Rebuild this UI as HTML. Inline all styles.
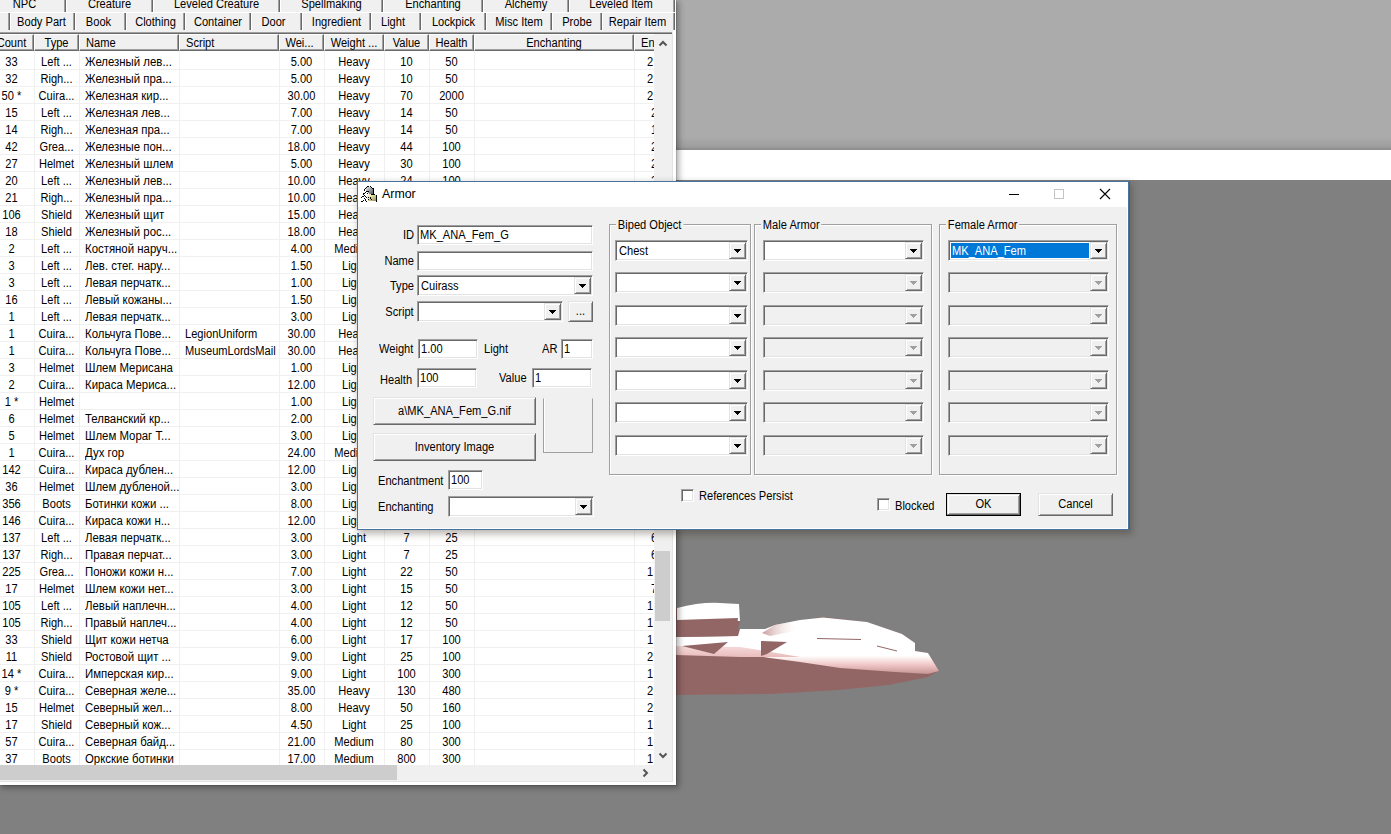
<!DOCTYPE html><html><head><meta charset="utf-8"><style>
*{box-sizing:border-box;margin:0;padding:0}
html,body{width:1391px;height:834px;overflow:hidden;background:#808080;font-family:"Liberation Sans", sans-serif;font-size:10.6px;color:#000}
.ab{position:absolute}
.t{position:absolute;white-space:nowrap;line-height:12px;font-size:12px;transform:scaleX(0.925);transform-origin:0 0}
.t.ctr{transform-origin:50% 0}
.t.rt{transform-origin:100% 0}
.sunk{position:absolute;background:#fff;border-top:1px solid #a0a0a0;border-left:1px solid #a0a0a0;border-bottom:1px solid #fff;border-right:1px solid #fff;box-shadow:inset 1px 1px 0 #696969, inset -1px -1px 0 #e3e3e3}
.sunk.dis{background:#f0f0f0}
.rais{position:absolute;background:#f0f0f0;border-top:1px solid #e3e3e3;border-left:1px solid #e3e3e3;border-bottom:1px solid #696969;border-right:1px solid #696969;box-shadow:inset 1px 1px 0 #fff, inset -1px -1px 0 #a0a0a0}
.tri{position:absolute;width:0;height:0;border-left:3.5px solid transparent;border-right:3.5px solid transparent;border-top:4px solid #000}
.tri.dis{border-top-color:#a0a0a0}
.grp{position:absolute;border:1px solid #a0a0a0;box-shadow:1px 1px 0 #fff, inset 1px 1px 0 #fff}
.gl{position:absolute;background:#f0f0f0;padding:0 2px;line-height:12px;white-space:nowrap;font-size:12px;transform:scaleX(0.925);transform-origin:0 0}
.row{position:absolute;left:0;width:654px;height:17px}
.c{position:absolute;top:0;height:16px;line-height:16px;white-space:nowrap;font-size:12px;transform:scaleX(0.925);transform-origin:0 0}
.c.ctr{transform-origin:50% 0}
</style></head><body>
<div class="ab" style="left:676px;top:0;width:715px;height:150px;background:linear-gradient(#ababab 0,#ababab 137px,#9d9d9d 147px,#8e8e8e 149px)"></div>
<div class="ab" style="left:676px;top:150px;width:715px;height:30px;background:#fff"></div>
<svg class="ab" style="left:0;top:0" width="1391" height="834">
<defs>
<linearGradient id="g1" x1="0" y1="617" x2="0" y2="674" gradientUnits="userSpaceOnUse"><stop offset="0" stop-color="#fff"/><stop offset="0.68" stop-color="#fff"/><stop offset="0.84" stop-color="#f0c6c6"/><stop offset="1" stop-color="#c49494"/></linearGradient>
<linearGradient id="g2" x1="0" y1="646" x2="0" y2="660" gradientUnits="userSpaceOnUse"><stop offset="0" stop-color="#f6dada"/><stop offset="1" stop-color="#e6b4b4"/></linearGradient>
<linearGradient id="g3" x1="760" y1="0" x2="800" y2="0" gradientUnits="userSpaceOnUse"><stop offset="0" stop-color="#c58f8f"/><stop offset="1" stop-color="#fff" stop-opacity="0"/></linearGradient>
</defs>
<polygon fill="#936666" points="676,608 710,603 739,604 740,621 738,629 765,629 775,625 823,617 867,622 902,634 915,643 915,651 928,653 939,671 928,677 889,685 838,690 771,694 676,695"/>
<polygon fill="url(#g1)" points="740,629 765,629 775,625 800,620 823,617.5 867,622 902,634 915,643 915,651 928,653 939,671 928,674 895,672 840,668 800,662 770,658 740,653 676,651 676,637 738,636"/>
<polygon fill="url(#g2)" points="676,646 740,647 771,652 800,657 740,657 676,655"/>
<polygon fill="url(#g3)" points="762,633 775,625 790,622 800,630 770,636"/>
<path fill="#fff" d="M677,608 Q700,602 720,603 L739,604 L740,621 L677,621 Z"/>
<polygon fill="#936666" points="677,620 738,618 736,636 677,637"/>
<polygon fill="#936666" points="682,646 728,642 714,654"/>
<polygon fill="#936666" points="761,641 787,642 767,654 761,656"/>
<line x1="817" y1="638.5" x2="861" y2="639.5" stroke="#936666" stroke-width="1"/>
<line x1="877" y1="646" x2="897" y2="651" stroke="#936666" stroke-width="1"/>
</svg>
<div class="ab" style="left:0;top:0;width:676px;height:785px;background:#f0f0f0;border-right:3px solid #fff;border-bottom:3px solid #fff;box-shadow:1px 1px 0 rgba(0,0,0,0.12), 2px 2px 6px 1px rgba(0,0,0,0.32)"></div>
<div class="ab" style="left:672px;top:33px;width:1px;height:749px;background:#e3e3e3"></div>
<div class="ab" style="left:0;top:781px;width:673px;height:1px;background:#e3e3e3"></div>
<div class="ab" style="left:-17px;top:-8px;width:83px;height:20px;border-left:1px solid #fff;border-right:1px solid #696969;box-shadow:inset -1px 0 0 #a0a0a0"></div>
<div class="t ctr" style="left:-17px;width:83px;top:-2px;text-align:center">NPC</div>
<div class="ab" style="left:66px;top:-8px;width:87px;height:20px;border-left:1px solid #fff;border-right:1px solid #696969;box-shadow:inset -1px 0 0 #a0a0a0"></div>
<div class="t ctr" style="left:66px;width:87px;top:-2px;text-align:center">Creature</div>
<div class="ab" style="left:153px;top:-8px;width:127px;height:20px;border-left:1px solid #fff;border-right:1px solid #696969;box-shadow:inset -1px 0 0 #a0a0a0"></div>
<div class="t ctr" style="left:153px;width:127px;top:-2px;text-align:center">Leveled Creature</div>
<div class="ab" style="left:280px;top:-8px;width:103px;height:20px;border-left:1px solid #fff;border-right:1px solid #696969;box-shadow:inset -1px 0 0 #a0a0a0"></div>
<div class="t ctr" style="left:280px;width:103px;top:-2px;text-align:center">Spellmaking</div>
<div class="ab" style="left:383px;top:-8px;width:100px;height:20px;border-left:1px solid #fff;border-right:1px solid #696969;box-shadow:inset -1px 0 0 #a0a0a0"></div>
<div class="t ctr" style="left:383px;width:100px;top:-2px;text-align:center">Enchanting</div>
<div class="ab" style="left:483px;top:-8px;width:86px;height:20px;border-left:1px solid #fff;border-right:1px solid #696969;box-shadow:inset -1px 0 0 #a0a0a0"></div>
<div class="t ctr" style="left:483px;width:86px;top:-2px;text-align:center">Alchemy</div>
<div class="ab" style="left:569px;top:-8px;width:106px;height:20px;border-left:1px solid #fff;border-right:1px solid #696969;box-shadow:inset -1px 0 0 #a0a0a0"></div>
<div class="t ctr" style="left:568px;width:106px;top:-2px;text-align:center">Leveled Item</div>
<div class="ab" style="left:0;top:12px;width:674px;height:1px;background:#fff"></div>
<div class="ab" style="left:-40px;top:13px;width:50px;height:17px;border-left:1px solid #fff;border-right:1px solid #696969;box-shadow:inset -1px 0 0 #a0a0a0"></div>
<div class="t ctr" style="left:-40px;width:50px;top:16px;text-align:center"></div>
<div class="ab" style="left:10px;top:13px;width:65px;height:17px;border-left:1px solid #fff;border-right:1px solid #696969;box-shadow:inset -1px 0 0 #a0a0a0"></div>
<div class="t ctr" style="left:9px;width:65px;top:16px;text-align:center">Body Part</div>
<div class="ab" style="left:75px;top:13px;width:51px;height:17px;border-left:1px solid #fff;border-right:1px solid #696969;box-shadow:inset -1px 0 0 #a0a0a0"></div>
<div class="t ctr" style="left:72.5px;width:51px;top:16px;text-align:center">Book</div>
<div class="ab" style="left:126px;top:13px;width:59px;height:17px;border-left:1px solid #fff;border-right:1px solid #696969;box-shadow:inset -1px 0 0 #a0a0a0"></div>
<div class="t ctr" style="left:126px;width:59px;top:16px;text-align:center">Clothing</div>
<div class="ab" style="left:185px;top:13px;width:66px;height:17px;border-left:1px solid #fff;border-right:1px solid #696969;box-shadow:inset -1px 0 0 #a0a0a0"></div>
<div class="t ctr" style="left:185px;width:66px;top:16px;text-align:center">Container</div>
<div class="ab" style="left:251px;top:13px;width:51px;height:17px;border-left:1px solid #fff;border-right:1px solid #696969;box-shadow:inset -1px 0 0 #a0a0a0"></div>
<div class="t ctr" style="left:248px;width:51px;top:16px;text-align:center">Door</div>
<div class="ab" style="left:302px;top:13px;width:69px;height:17px;border-left:1px solid #fff;border-right:1px solid #696969;box-shadow:inset -1px 0 0 #a0a0a0"></div>
<div class="t ctr" style="left:302px;width:69px;top:16px;text-align:center">Ingredient</div>
<div class="ab" style="left:371px;top:13px;width:50px;height:17px;border-left:1px solid #fff;border-right:1px solid #696969;box-shadow:inset -1px 0 0 #a0a0a0"></div>
<div class="t ctr" style="left:368px;width:50px;top:16px;text-align:center">Light</div>
<div class="ab" style="left:421px;top:13px;width:65px;height:17px;border-left:1px solid #fff;border-right:1px solid #696969;box-shadow:inset -1px 0 0 #a0a0a0"></div>
<div class="t ctr" style="left:421px;width:65px;top:16px;text-align:center">Lockpick</div>
<div class="ab" style="left:486px;top:13px;width:66px;height:17px;border-left:1px solid #fff;border-right:1px solid #696969;box-shadow:inset -1px 0 0 #a0a0a0"></div>
<div class="t ctr" style="left:486px;width:66px;top:16px;text-align:center">Misc Item</div>
<div class="ab" style="left:552px;top:13px;width:50px;height:17px;border-left:1px solid #fff;border-right:1px solid #696969;box-shadow:inset -1px 0 0 #a0a0a0"></div>
<div class="t ctr" style="left:552px;width:50px;top:16px;text-align:center">Probe</div>
<div class="ab" style="left:602px;top:13px;width:73px;height:17px;border-left:1px solid #fff;border-right:1px solid #696969;box-shadow:inset -1px 0 0 #a0a0a0"></div>
<div class="t ctr" style="left:600.5px;width:73px;top:16px;text-align:center">Repair Item</div>
<div class="ab" style="left:0;top:32px;width:672px;height:1px;background:#a0a0a0"></div>
<div class="ab" style="left:0;top:33px;width:672px;height:1px;background:#696969"></div>
<div class="ab" style="left:0;top:34px;width:672px;height:731px;background:#fff"></div>
<div class="ab" style="left:0;top:0;width:654px;height:60px;overflow:hidden">
<div class="ab" style="left:-11px;top:34px;width:45px;height:17px;background:#f0f0f0;border-left:1px solid #fff;border-top:1px solid #fff;border-right:1px solid #696969;border-bottom:1px solid #696969;box-shadow:inset -1px -1px 0 #a0a0a0"></div>
<div class="ab" style="left:34px;top:34px;width:45px;height:17px;background:#f0f0f0;border-left:1px solid #fff;border-top:1px solid #fff;border-right:1px solid #696969;border-bottom:1px solid #696969;box-shadow:inset -1px -1px 0 #a0a0a0"></div>
<div class="ab" style="left:79px;top:34px;width:100px;height:17px;background:#f0f0f0;border-left:1px solid #fff;border-top:1px solid #fff;border-right:1px solid #696969;border-bottom:1px solid #696969;box-shadow:inset -1px -1px 0 #a0a0a0"></div>
<div class="ab" style="left:179px;top:34px;width:100px;height:17px;background:#f0f0f0;border-left:1px solid #fff;border-top:1px solid #fff;border-right:1px solid #696969;border-bottom:1px solid #696969;box-shadow:inset -1px -1px 0 #a0a0a0"></div>
<div class="ab" style="left:279px;top:34px;width:45px;height:17px;background:#f0f0f0;border-left:1px solid #fff;border-top:1px solid #fff;border-right:1px solid #696969;border-bottom:1px solid #696969;box-shadow:inset -1px -1px 0 #a0a0a0"></div>
<div class="ab" style="left:324px;top:34px;width:60px;height:17px;background:#f0f0f0;border-left:1px solid #fff;border-top:1px solid #fff;border-right:1px solid #696969;border-bottom:1px solid #696969;box-shadow:inset -1px -1px 0 #a0a0a0"></div>
<div class="ab" style="left:384px;top:34px;width:45px;height:17px;background:#f0f0f0;border-left:1px solid #fff;border-top:1px solid #fff;border-right:1px solid #696969;border-bottom:1px solid #696969;box-shadow:inset -1px -1px 0 #a0a0a0"></div>
<div class="ab" style="left:429px;top:34px;width:45px;height:17px;background:#f0f0f0;border-left:1px solid #fff;border-top:1px solid #fff;border-right:1px solid #696969;border-bottom:1px solid #696969;box-shadow:inset -1px -1px 0 #a0a0a0"></div>
<div class="ab" style="left:474px;top:34px;width:160px;height:17px;background:#f0f0f0;border-left:1px solid #fff;border-top:1px solid #fff;border-right:1px solid #696969;border-bottom:1px solid #696969;box-shadow:inset -1px -1px 0 #a0a0a0"></div>
<div class="ab" style="left:634px;top:34px;width:44px;height:17px;background:#f0f0f0;border-left:1px solid #fff;border-top:1px solid #fff;border-right:1px solid #696969;border-bottom:1px solid #696969;box-shadow:inset -1px -1px 0 #a0a0a0"></div>
<div class="t ctr" style="left:-11px;width:45px;top:37px;text-align:center">Count</div>
<div class="t ctr" style="left:34px;width:45px;top:37px;text-align:center">Type</div>
<div class="t" style="left:86px;top:37px">Name</div>
<div class="t" style="left:186px;top:37px">Script</div>
<div class="t ctr" style="left:277px;width:45px;top:37px;text-align:center">Wei...</div>
<div class="t ctr" style="left:324px;width:60px;top:37px;text-align:center">Weight ...</div>
<div class="t ctr" style="left:384px;width:45px;top:37px;text-align:center">Value</div>
<div class="t ctr" style="left:429px;width:45px;top:37px;text-align:center">Health</div>
<div class="t ctr" style="left:474px;width:160px;top:37px;text-align:center">Enchanting</div>
<div class="t" style="left:641px;top:37px">En</div>
</div>
<div class="ab" style="left:0;top:51px;width:654px;height:714px;overflow:hidden">
<div class="ab" style="left:34px;top:0;width:1px;height:714px;background:#f0f0f0"></div>
<div class="ab" style="left:79px;top:0;width:1px;height:714px;background:#f0f0f0"></div>
<div class="ab" style="left:179px;top:0;width:1px;height:714px;background:#f0f0f0"></div>
<div class="ab" style="left:279px;top:0;width:1px;height:714px;background:#f0f0f0"></div>
<div class="ab" style="left:324px;top:0;width:1px;height:714px;background:#f0f0f0"></div>
<div class="ab" style="left:384px;top:0;width:1px;height:714px;background:#f0f0f0"></div>
<div class="ab" style="left:429px;top:0;width:1px;height:714px;background:#f0f0f0"></div>
<div class="ab" style="left:474px;top:0;width:1px;height:714px;background:#f0f0f0"></div>
<div class="ab" style="left:634px;top:0;width:1px;height:714px;background:#f0f0f0"></div>
<div class="ab" style="left:0;top:18px;width:654px;height:1px;background:#f0f0f0"></div>
<div class="c ctr" style="left:-11px;width:45px;top:3px;text-align:center">33</div><div class="c ctr" style="left:34px;width:45px;top:3px;text-align:center">Left ...</div><div class="c" style="left:85px;width:94px;top:3px;transform:scaleX(0.95)">Железный лев...</div><div class="c ctr" style="left:279px;width:45px;top:3px;text-align:center">5.00</div><div class="c ctr" style="left:324px;width:60px;top:3px;text-align:center">Heavy</div><div class="c ctr" style="left:384px;width:45px;top:3px;text-align:center">10</div><div class="c ctr" style="left:429px;width:45px;top:3px;text-align:center">50</div><div class="c" style="left:647px;top:3px">2</div>
<div class="ab" style="left:0;top:35px;width:654px;height:1px;background:#f0f0f0"></div>
<div class="c ctr" style="left:-11px;width:45px;top:20px;text-align:center">32</div><div class="c ctr" style="left:34px;width:45px;top:20px;text-align:center">Righ...</div><div class="c" style="left:85px;width:94px;top:20px;transform:scaleX(0.95)">Железный пра...</div><div class="c ctr" style="left:279px;width:45px;top:20px;text-align:center">5.00</div><div class="c ctr" style="left:324px;width:60px;top:20px;text-align:center">Heavy</div><div class="c ctr" style="left:384px;width:45px;top:20px;text-align:center">10</div><div class="c ctr" style="left:429px;width:45px;top:20px;text-align:center">50</div><div class="c" style="left:647px;top:20px">2</div>
<div class="ab" style="left:0;top:52px;width:654px;height:1px;background:#f0f0f0"></div>
<div class="c ctr" style="left:-11px;width:45px;top:37px;text-align:center">50 *</div><div class="c ctr" style="left:34px;width:45px;top:37px;text-align:center">Cuira...</div><div class="c" style="left:85px;width:94px;top:37px;transform:scaleX(0.95)">Железная кир...</div><div class="c ctr" style="left:279px;width:45px;top:37px;text-align:center">30.00</div><div class="c ctr" style="left:324px;width:60px;top:37px;text-align:center">Heavy</div><div class="c ctr" style="left:384px;width:45px;top:37px;text-align:center">70</div><div class="c ctr" style="left:429px;width:45px;top:37px;text-align:center">2000</div><div class="c" style="left:647px;top:37px">2</div>
<div class="ab" style="left:0;top:69px;width:654px;height:1px;background:#f0f0f0"></div>
<div class="c ctr" style="left:-11px;width:45px;top:54px;text-align:center">15</div><div class="c ctr" style="left:34px;width:45px;top:54px;text-align:center">Left ...</div><div class="c" style="left:85px;width:94px;top:54px;transform:scaleX(0.95)">Железная лев...</div><div class="c ctr" style="left:279px;width:45px;top:54px;text-align:center">7.00</div><div class="c ctr" style="left:324px;width:60px;top:54px;text-align:center">Heavy</div><div class="c ctr" style="left:384px;width:45px;top:54px;text-align:center">14</div><div class="c ctr" style="left:429px;width:45px;top:54px;text-align:center">50</div><div class="c" style="left:650.5px;top:54px">2</div>
<div class="ab" style="left:0;top:86px;width:654px;height:1px;background:#f0f0f0"></div>
<div class="c ctr" style="left:-11px;width:45px;top:71px;text-align:center">14</div><div class="c ctr" style="left:34px;width:45px;top:71px;text-align:center">Righ...</div><div class="c" style="left:85px;width:94px;top:71px;transform:scaleX(0.95)">Железная пра...</div><div class="c ctr" style="left:279px;width:45px;top:71px;text-align:center">7.00</div><div class="c ctr" style="left:324px;width:60px;top:71px;text-align:center">Heavy</div><div class="c ctr" style="left:384px;width:45px;top:71px;text-align:center">14</div><div class="c ctr" style="left:429px;width:45px;top:71px;text-align:center">50</div><div class="c" style="left:650.5px;top:71px">1</div>
<div class="ab" style="left:0;top:103px;width:654px;height:1px;background:#f0f0f0"></div>
<div class="c ctr" style="left:-11px;width:45px;top:88px;text-align:center">42</div><div class="c ctr" style="left:34px;width:45px;top:88px;text-align:center">Grea...</div><div class="c" style="left:85px;width:94px;top:88px;transform:scaleX(0.95)">Железные пон...</div><div class="c ctr" style="left:279px;width:45px;top:88px;text-align:center">18.00</div><div class="c ctr" style="left:324px;width:60px;top:88px;text-align:center">Heavy</div><div class="c ctr" style="left:384px;width:45px;top:88px;text-align:center">44</div><div class="c ctr" style="left:429px;width:45px;top:88px;text-align:center">100</div><div class="c" style="left:650.5px;top:88px">2</div>
<div class="ab" style="left:0;top:120px;width:654px;height:1px;background:#f0f0f0"></div>
<div class="c ctr" style="left:-11px;width:45px;top:105px;text-align:center">27</div><div class="c ctr" style="left:34px;width:45px;top:105px;text-align:center">Helmet</div><div class="c" style="left:85px;width:94px;top:105px;transform:scaleX(0.95)">Железный шлем</div><div class="c ctr" style="left:279px;width:45px;top:105px;text-align:center">5.00</div><div class="c ctr" style="left:324px;width:60px;top:105px;text-align:center">Heavy</div><div class="c ctr" style="left:384px;width:45px;top:105px;text-align:center">30</div><div class="c ctr" style="left:429px;width:45px;top:105px;text-align:center">100</div><div class="c" style="left:650.5px;top:105px">2</div>
<div class="ab" style="left:0;top:137px;width:654px;height:1px;background:#f0f0f0"></div>
<div class="c ctr" style="left:-11px;width:45px;top:122px;text-align:center">20</div><div class="c ctr" style="left:34px;width:45px;top:122px;text-align:center">Left ...</div><div class="c" style="left:85px;width:94px;top:122px;transform:scaleX(0.95)">Железный лев...</div><div class="c ctr" style="left:279px;width:45px;top:122px;text-align:center">10.00</div><div class="c ctr" style="left:324px;width:60px;top:122px;text-align:center">Heavy</div><div class="c ctr" style="left:384px;width:45px;top:122px;text-align:center">24</div><div class="c ctr" style="left:429px;width:45px;top:122px;text-align:center">100</div><div class="c" style="left:650.5px;top:122px">2</div>
<div class="ab" style="left:0;top:154px;width:654px;height:1px;background:#f0f0f0"></div>
<div class="c ctr" style="left:-11px;width:45px;top:139px;text-align:center">21</div><div class="c ctr" style="left:34px;width:45px;top:139px;text-align:center">Righ...</div><div class="c" style="left:85px;width:94px;top:139px;transform:scaleX(0.95)">Железный пра...</div><div class="c ctr" style="left:279px;width:45px;top:139px;text-align:center">10.00</div><div class="c ctr" style="left:324px;width:60px;top:139px;text-align:center">Heavy</div><div class="c ctr" style="left:384px;width:45px;top:139px;text-align:center">24</div><div class="c ctr" style="left:429px;width:45px;top:139px;text-align:center">100</div><div class="c" style="left:650.5px;top:139px">2</div>
<div class="ab" style="left:0;top:171px;width:654px;height:1px;background:#f0f0f0"></div>
<div class="c ctr" style="left:-11px;width:45px;top:156px;text-align:center">106</div><div class="c ctr" style="left:34px;width:45px;top:156px;text-align:center">Shield</div><div class="c" style="left:85px;width:94px;top:156px;transform:scaleX(0.95)">Железный щит</div><div class="c ctr" style="left:279px;width:45px;top:156px;text-align:center">15.00</div><div class="c ctr" style="left:324px;width:60px;top:156px;text-align:center">Heavy</div>
<div class="ab" style="left:0;top:188px;width:654px;height:1px;background:#f0f0f0"></div>
<div class="c ctr" style="left:-11px;width:45px;top:173px;text-align:center">18</div><div class="c ctr" style="left:34px;width:45px;top:173px;text-align:center">Shield</div><div class="c" style="left:85px;width:94px;top:173px;transform:scaleX(0.95)">Железный рос...</div><div class="c ctr" style="left:279px;width:45px;top:173px;text-align:center">18.00</div><div class="c ctr" style="left:324px;width:60px;top:173px;text-align:center">Heavy</div>
<div class="ab" style="left:0;top:205px;width:654px;height:1px;background:#f0f0f0"></div>
<div class="c ctr" style="left:-11px;width:45px;top:190px;text-align:center">2</div><div class="c ctr" style="left:34px;width:45px;top:190px;text-align:center">Left ...</div><div class="c" style="left:85px;width:94px;top:190px;transform:scaleX(0.95)">Костяной наруч...</div><div class="c ctr" style="left:279px;width:45px;top:190px;text-align:center">4.00</div><div class="c ctr" style="left:324px;width:60px;top:190px;text-align:center">Medium</div>
<div class="ab" style="left:0;top:222px;width:654px;height:1px;background:#f0f0f0"></div>
<div class="c ctr" style="left:-11px;width:45px;top:207px;text-align:center">3</div><div class="c ctr" style="left:34px;width:45px;top:207px;text-align:center">Left ...</div><div class="c" style="left:85px;width:94px;top:207px;transform:scaleX(0.95)">Лев. стег. нару...</div><div class="c ctr" style="left:279px;width:45px;top:207px;text-align:center">1.50</div><div class="c ctr" style="left:324px;width:60px;top:207px;text-align:center">Light</div>
<div class="ab" style="left:0;top:239px;width:654px;height:1px;background:#f0f0f0"></div>
<div class="c ctr" style="left:-11px;width:45px;top:224px;text-align:center">3</div><div class="c ctr" style="left:34px;width:45px;top:224px;text-align:center">Left ...</div><div class="c" style="left:85px;width:94px;top:224px;transform:scaleX(0.95)">Левая перчатк...</div><div class="c ctr" style="left:279px;width:45px;top:224px;text-align:center">1.00</div><div class="c ctr" style="left:324px;width:60px;top:224px;text-align:center">Light</div>
<div class="ab" style="left:0;top:256px;width:654px;height:1px;background:#f0f0f0"></div>
<div class="c ctr" style="left:-11px;width:45px;top:241px;text-align:center">16</div><div class="c ctr" style="left:34px;width:45px;top:241px;text-align:center">Left ...</div><div class="c" style="left:85px;width:94px;top:241px;transform:scaleX(0.95)">Левый кожаны...</div><div class="c ctr" style="left:279px;width:45px;top:241px;text-align:center">1.50</div><div class="c ctr" style="left:324px;width:60px;top:241px;text-align:center">Light</div>
<div class="ab" style="left:0;top:273px;width:654px;height:1px;background:#f0f0f0"></div>
<div class="c ctr" style="left:-11px;width:45px;top:258px;text-align:center">1</div><div class="c ctr" style="left:34px;width:45px;top:258px;text-align:center">Left ...</div><div class="c" style="left:85px;width:94px;top:258px;transform:scaleX(0.95)">Левая перчатк...</div><div class="c ctr" style="left:279px;width:45px;top:258px;text-align:center">3.00</div><div class="c ctr" style="left:324px;width:60px;top:258px;text-align:center">Light</div>
<div class="ab" style="left:0;top:290px;width:654px;height:1px;background:#f0f0f0"></div>
<div class="c ctr" style="left:-11px;width:45px;top:275px;text-align:center">1</div><div class="c ctr" style="left:34px;width:45px;top:275px;text-align:center">Cuira...</div><div class="c" style="left:85px;width:94px;top:275px;transform:scaleX(0.95)">Кольчуга Пове...</div><div class="c" style="left:185px;width:94px;top:275px">LegionUniform</div><div class="c ctr" style="left:279px;width:45px;top:275px;text-align:center">30.00</div><div class="c ctr" style="left:324px;width:60px;top:275px;text-align:center">Heavy</div>
<div class="ab" style="left:0;top:307px;width:654px;height:1px;background:#f0f0f0"></div>
<div class="c ctr" style="left:-11px;width:45px;top:292px;text-align:center">1</div><div class="c ctr" style="left:34px;width:45px;top:292px;text-align:center">Cuira...</div><div class="c" style="left:85px;width:94px;top:292px;transform:scaleX(0.95)">Кольчуга Пове...</div><div class="c" style="left:185px;width:94px;top:292px">MuseumLordsMail</div><div class="c ctr" style="left:279px;width:45px;top:292px;text-align:center">30.00</div><div class="c ctr" style="left:324px;width:60px;top:292px;text-align:center">Heavy</div>
<div class="ab" style="left:0;top:324px;width:654px;height:1px;background:#f0f0f0"></div>
<div class="c ctr" style="left:-11px;width:45px;top:309px;text-align:center">3</div><div class="c ctr" style="left:34px;width:45px;top:309px;text-align:center">Helmet</div><div class="c" style="left:85px;width:94px;top:309px;transform:scaleX(0.95)">Шлем Мерисана</div><div class="c ctr" style="left:279px;width:45px;top:309px;text-align:center">1.00</div><div class="c ctr" style="left:324px;width:60px;top:309px;text-align:center">Light</div>
<div class="ab" style="left:0;top:341px;width:654px;height:1px;background:#f0f0f0"></div>
<div class="c ctr" style="left:-11px;width:45px;top:326px;text-align:center">2</div><div class="c ctr" style="left:34px;width:45px;top:326px;text-align:center">Cuira...</div><div class="c" style="left:85px;width:94px;top:326px;transform:scaleX(0.95)">Кираса Мериса...</div><div class="c ctr" style="left:279px;width:45px;top:326px;text-align:center">12.00</div><div class="c ctr" style="left:324px;width:60px;top:326px;text-align:center">Light</div>
<div class="ab" style="left:0;top:358px;width:654px;height:1px;background:#f0f0f0"></div>
<div class="c ctr" style="left:-11px;width:45px;top:343px;text-align:center">1 *</div><div class="c ctr" style="left:34px;width:45px;top:343px;text-align:center">Helmet</div><div class="c ctr" style="left:279px;width:45px;top:343px;text-align:center">1.00</div><div class="c ctr" style="left:324px;width:60px;top:343px;text-align:center">Light</div>
<div class="ab" style="left:0;top:375px;width:654px;height:1px;background:#f0f0f0"></div>
<div class="c ctr" style="left:-11px;width:45px;top:360px;text-align:center">6</div><div class="c ctr" style="left:34px;width:45px;top:360px;text-align:center">Helmet</div><div class="c" style="left:85px;width:94px;top:360px;transform:scaleX(0.95)">Телванский кр...</div><div class="c ctr" style="left:279px;width:45px;top:360px;text-align:center">2.00</div><div class="c ctr" style="left:324px;width:60px;top:360px;text-align:center">Light</div>
<div class="ab" style="left:0;top:392px;width:654px;height:1px;background:#f0f0f0"></div>
<div class="c ctr" style="left:-11px;width:45px;top:377px;text-align:center">5</div><div class="c ctr" style="left:34px;width:45px;top:377px;text-align:center">Helmet</div><div class="c" style="left:85px;width:94px;top:377px;transform:scaleX(0.95)">Шлем Мораг Т...</div><div class="c ctr" style="left:279px;width:45px;top:377px;text-align:center">3.00</div><div class="c ctr" style="left:324px;width:60px;top:377px;text-align:center">Light</div>
<div class="ab" style="left:0;top:409px;width:654px;height:1px;background:#f0f0f0"></div>
<div class="c ctr" style="left:-11px;width:45px;top:394px;text-align:center">1</div><div class="c ctr" style="left:34px;width:45px;top:394px;text-align:center">Cuira...</div><div class="c" style="left:85px;width:94px;top:394px;transform:scaleX(0.95)">Дух гор</div><div class="c ctr" style="left:279px;width:45px;top:394px;text-align:center">24.00</div><div class="c ctr" style="left:324px;width:60px;top:394px;text-align:center">Medium</div>
<div class="ab" style="left:0;top:426px;width:654px;height:1px;background:#f0f0f0"></div>
<div class="c ctr" style="left:-11px;width:45px;top:411px;text-align:center">142</div><div class="c ctr" style="left:34px;width:45px;top:411px;text-align:center">Cuira...</div><div class="c" style="left:85px;width:94px;top:411px;transform:scaleX(0.95)">Кираса дублен...</div><div class="c ctr" style="left:279px;width:45px;top:411px;text-align:center">12.00</div><div class="c ctr" style="left:324px;width:60px;top:411px;text-align:center">Light</div>
<div class="ab" style="left:0;top:443px;width:654px;height:1px;background:#f0f0f0"></div>
<div class="c ctr" style="left:-11px;width:45px;top:428px;text-align:center">36</div><div class="c ctr" style="left:34px;width:45px;top:428px;text-align:center">Helmet</div><div class="c" style="left:85px;width:94px;top:428px;transform:scaleX(0.95)">Шлем дубленой...</div><div class="c ctr" style="left:279px;width:45px;top:428px;text-align:center">3.00</div><div class="c ctr" style="left:324px;width:60px;top:428px;text-align:center">Light</div>
<div class="ab" style="left:0;top:460px;width:654px;height:1px;background:#f0f0f0"></div>
<div class="c ctr" style="left:-11px;width:45px;top:445px;text-align:center">356</div><div class="c ctr" style="left:34px;width:45px;top:445px;text-align:center">Boots</div><div class="c" style="left:85px;width:94px;top:445px;transform:scaleX(0.95)">Ботинки кожи ...</div><div class="c ctr" style="left:279px;width:45px;top:445px;text-align:center">8.00</div><div class="c ctr" style="left:324px;width:60px;top:445px;text-align:center">Light</div>
<div class="ab" style="left:0;top:477px;width:654px;height:1px;background:#f0f0f0"></div>
<div class="c ctr" style="left:-11px;width:45px;top:462px;text-align:center">146</div><div class="c ctr" style="left:34px;width:45px;top:462px;text-align:center">Cuira...</div><div class="c" style="left:85px;width:94px;top:462px;transform:scaleX(0.95)">Кираса кожи н...</div><div class="c ctr" style="left:279px;width:45px;top:462px;text-align:center">12.00</div><div class="c ctr" style="left:324px;width:60px;top:462px;text-align:center">Light</div>
<div class="ab" style="left:0;top:494px;width:654px;height:1px;background:#f0f0f0"></div>
<div class="c ctr" style="left:-11px;width:45px;top:479px;text-align:center">137</div><div class="c ctr" style="left:34px;width:45px;top:479px;text-align:center">Left ...</div><div class="c" style="left:85px;width:94px;top:479px;transform:scaleX(0.95)">Левая перчатк...</div><div class="c ctr" style="left:279px;width:45px;top:479px;text-align:center">3.00</div><div class="c ctr" style="left:324px;width:60px;top:479px;text-align:center">Light</div><div class="c ctr" style="left:384px;width:45px;top:479px;text-align:center">7</div><div class="c ctr" style="left:429px;width:45px;top:479px;text-align:center">25</div><div class="c" style="left:650.5px;top:479px">6</div>
<div class="ab" style="left:0;top:511px;width:654px;height:1px;background:#f0f0f0"></div>
<div class="c ctr" style="left:-11px;width:45px;top:496px;text-align:center">137</div><div class="c ctr" style="left:34px;width:45px;top:496px;text-align:center">Righ...</div><div class="c" style="left:85px;width:94px;top:496px;transform:scaleX(0.95)">Правая перчат...</div><div class="c ctr" style="left:279px;width:45px;top:496px;text-align:center">3.00</div><div class="c ctr" style="left:324px;width:60px;top:496px;text-align:center">Light</div><div class="c ctr" style="left:384px;width:45px;top:496px;text-align:center">7</div><div class="c ctr" style="left:429px;width:45px;top:496px;text-align:center">25</div><div class="c" style="left:650.5px;top:496px">6</div>
<div class="ab" style="left:0;top:528px;width:654px;height:1px;background:#f0f0f0"></div>
<div class="c ctr" style="left:-11px;width:45px;top:513px;text-align:center">225</div><div class="c ctr" style="left:34px;width:45px;top:513px;text-align:center">Grea...</div><div class="c" style="left:85px;width:94px;top:513px;transform:scaleX(0.95)">Поножи кожи н...</div><div class="c ctr" style="left:279px;width:45px;top:513px;text-align:center">7.00</div><div class="c ctr" style="left:324px;width:60px;top:513px;text-align:center">Light</div><div class="c ctr" style="left:384px;width:45px;top:513px;text-align:center">22</div><div class="c ctr" style="left:429px;width:45px;top:513px;text-align:center">50</div><div class="c" style="left:647px;top:513px">1</div>
<div class="ab" style="left:0;top:545px;width:654px;height:1px;background:#f0f0f0"></div>
<div class="c ctr" style="left:-11px;width:45px;top:530px;text-align:center">17</div><div class="c ctr" style="left:34px;width:45px;top:530px;text-align:center">Helmet</div><div class="c" style="left:85px;width:94px;top:530px;transform:scaleX(0.95)">Шлем кожи нет...</div><div class="c ctr" style="left:279px;width:45px;top:530px;text-align:center">3.00</div><div class="c ctr" style="left:324px;width:60px;top:530px;text-align:center">Light</div><div class="c ctr" style="left:384px;width:45px;top:530px;text-align:center">15</div><div class="c ctr" style="left:429px;width:45px;top:530px;text-align:center">50</div><div class="c" style="left:650.5px;top:530px">7</div>
<div class="ab" style="left:0;top:562px;width:654px;height:1px;background:#f0f0f0"></div>
<div class="c ctr" style="left:-11px;width:45px;top:547px;text-align:center">105</div><div class="c ctr" style="left:34px;width:45px;top:547px;text-align:center">Left ...</div><div class="c" style="left:85px;width:94px;top:547px;transform:scaleX(0.95)">Левый наплечн...</div><div class="c ctr" style="left:279px;width:45px;top:547px;text-align:center">4.00</div><div class="c ctr" style="left:324px;width:60px;top:547px;text-align:center">Light</div><div class="c ctr" style="left:384px;width:45px;top:547px;text-align:center">12</div><div class="c ctr" style="left:429px;width:45px;top:547px;text-align:center">50</div><div class="c" style="left:647px;top:547px">1</div>
<div class="ab" style="left:0;top:579px;width:654px;height:1px;background:#f0f0f0"></div>
<div class="c ctr" style="left:-11px;width:45px;top:564px;text-align:center">105</div><div class="c ctr" style="left:34px;width:45px;top:564px;text-align:center">Righ...</div><div class="c" style="left:85px;width:94px;top:564px;transform:scaleX(0.95)">Правый наплеч...</div><div class="c ctr" style="left:279px;width:45px;top:564px;text-align:center">4.00</div><div class="c ctr" style="left:324px;width:60px;top:564px;text-align:center">Light</div><div class="c ctr" style="left:384px;width:45px;top:564px;text-align:center">12</div><div class="c ctr" style="left:429px;width:45px;top:564px;text-align:center">50</div><div class="c" style="left:647px;top:564px">1</div>
<div class="ab" style="left:0;top:596px;width:654px;height:1px;background:#f0f0f0"></div>
<div class="c ctr" style="left:-11px;width:45px;top:581px;text-align:center">33</div><div class="c ctr" style="left:34px;width:45px;top:581px;text-align:center">Shield</div><div class="c" style="left:85px;width:94px;top:581px;transform:scaleX(0.95)">Щит кожи нетча</div><div class="c ctr" style="left:279px;width:45px;top:581px;text-align:center">6.00</div><div class="c ctr" style="left:324px;width:60px;top:581px;text-align:center">Light</div><div class="c ctr" style="left:384px;width:45px;top:581px;text-align:center">17</div><div class="c ctr" style="left:429px;width:45px;top:581px;text-align:center">100</div><div class="c" style="left:647px;top:581px">1</div>
<div class="ab" style="left:0;top:613px;width:654px;height:1px;background:#f0f0f0"></div>
<div class="c ctr" style="left:-11px;width:45px;top:598px;text-align:center">11</div><div class="c ctr" style="left:34px;width:45px;top:598px;text-align:center">Shield</div><div class="c" style="left:85px;width:94px;top:598px;transform:scaleX(0.95)">Ростовой щит ...</div><div class="c ctr" style="left:279px;width:45px;top:598px;text-align:center">9.00</div><div class="c ctr" style="left:324px;width:60px;top:598px;text-align:center">Light</div><div class="c ctr" style="left:384px;width:45px;top:598px;text-align:center">25</div><div class="c ctr" style="left:429px;width:45px;top:598px;text-align:center">100</div><div class="c" style="left:647px;top:598px">2</div>
<div class="ab" style="left:0;top:630px;width:654px;height:1px;background:#f0f0f0"></div>
<div class="c ctr" style="left:-11px;width:45px;top:615px;text-align:center">14 *</div><div class="c ctr" style="left:34px;width:45px;top:615px;text-align:center">Cuira...</div><div class="c" style="left:85px;width:94px;top:615px;transform:scaleX(0.95)">Имперская кир...</div><div class="c ctr" style="left:279px;width:45px;top:615px;text-align:center">9.00</div><div class="c ctr" style="left:324px;width:60px;top:615px;text-align:center">Light</div><div class="c ctr" style="left:384px;width:45px;top:615px;text-align:center">100</div><div class="c ctr" style="left:429px;width:45px;top:615px;text-align:center">300</div><div class="c" style="left:647px;top:615px">1</div>
<div class="ab" style="left:0;top:647px;width:654px;height:1px;background:#f0f0f0"></div>
<div class="c ctr" style="left:-11px;width:45px;top:632px;text-align:center">9 *</div><div class="c ctr" style="left:34px;width:45px;top:632px;text-align:center">Cuira...</div><div class="c" style="left:85px;width:94px;top:632px;transform:scaleX(0.95)">Северная желе...</div><div class="c ctr" style="left:279px;width:45px;top:632px;text-align:center">35.00</div><div class="c ctr" style="left:324px;width:60px;top:632px;text-align:center">Heavy</div><div class="c ctr" style="left:384px;width:45px;top:632px;text-align:center">130</div><div class="c ctr" style="left:429px;width:45px;top:632px;text-align:center">480</div><div class="c" style="left:647px;top:632px">2</div>
<div class="ab" style="left:0;top:664px;width:654px;height:1px;background:#f0f0f0"></div>
<div class="c ctr" style="left:-11px;width:45px;top:649px;text-align:center">15</div><div class="c ctr" style="left:34px;width:45px;top:649px;text-align:center">Helmet</div><div class="c" style="left:85px;width:94px;top:649px;transform:scaleX(0.95)">Северный жел...</div><div class="c ctr" style="left:279px;width:45px;top:649px;text-align:center">8.00</div><div class="c ctr" style="left:324px;width:60px;top:649px;text-align:center">Heavy</div><div class="c ctr" style="left:384px;width:45px;top:649px;text-align:center">50</div><div class="c ctr" style="left:429px;width:45px;top:649px;text-align:center">160</div><div class="c" style="left:647px;top:649px">2</div>
<div class="ab" style="left:0;top:681px;width:654px;height:1px;background:#f0f0f0"></div>
<div class="c ctr" style="left:-11px;width:45px;top:666px;text-align:center">17</div><div class="c ctr" style="left:34px;width:45px;top:666px;text-align:center">Shield</div><div class="c" style="left:85px;width:94px;top:666px;transform:scaleX(0.95)">Северный кож...</div><div class="c ctr" style="left:279px;width:45px;top:666px;text-align:center">4.50</div><div class="c ctr" style="left:324px;width:60px;top:666px;text-align:center">Light</div><div class="c ctr" style="left:384px;width:45px;top:666px;text-align:center">25</div><div class="c ctr" style="left:429px;width:45px;top:666px;text-align:center">100</div><div class="c" style="left:647px;top:666px">1</div>
<div class="ab" style="left:0;top:698px;width:654px;height:1px;background:#f0f0f0"></div>
<div class="c ctr" style="left:-11px;width:45px;top:683px;text-align:center">57</div><div class="c ctr" style="left:34px;width:45px;top:683px;text-align:center">Cuira...</div><div class="c" style="left:85px;width:94px;top:683px;transform:scaleX(0.95)">Северная байд...</div><div class="c ctr" style="left:279px;width:45px;top:683px;text-align:center">21.00</div><div class="c ctr" style="left:324px;width:60px;top:683px;text-align:center">Medium</div><div class="c ctr" style="left:384px;width:45px;top:683px;text-align:center">80</div><div class="c ctr" style="left:429px;width:45px;top:683px;text-align:center">300</div><div class="c" style="left:647px;top:683px">1</div>
<div class="ab" style="left:0;top:715px;width:654px;height:1px;background:#f0f0f0"></div>
<div class="c ctr" style="left:-11px;width:45px;top:700px;text-align:center">37</div><div class="c ctr" style="left:34px;width:45px;top:700px;text-align:center">Boots</div><div class="c" style="left:85px;width:94px;top:700px;transform:scaleX(0.95)">Оркские ботинки</div><div class="c ctr" style="left:279px;width:45px;top:700px;text-align:center">17.00</div><div class="c ctr" style="left:324px;width:60px;top:700px;text-align:center">Medium</div><div class="c ctr" style="left:384px;width:45px;top:700px;text-align:center">800</div><div class="c ctr" style="left:429px;width:45px;top:700px;text-align:center">300</div><div class="c" style="left:647px;top:700px">1</div>
</div>
<div class="ab" style="left:654px;top:34px;width:18px;height:731px;background:#f0f0f0"></div>
<div class="ab" style="left:655px;top:551px;width:15px;height:70px;background:#cdcdcd"></div>
<svg class="ab" style="left:654px;top:34px" width="18" height="731"><polyline points="5.5,11.5 9,8 12.5,11.5" fill="none" stroke="#555" stroke-width="2"/><polyline points="5.5,719.5 9,723 12.5,719.5" fill="none" stroke="#555" stroke-width="2"/></svg>
<div class="ab" style="left:0;top:765px;width:672px;height:16px;background:#f0f0f0"></div>
<div class="ab" style="left:0;top:765px;width:397px;height:15px;background:#cdcdcd"></div>
<svg class="ab" style="left:0;top:765px" width="672" height="17"><polyline points="643.5,4.5 647,8 643.5,11.5" fill="none" stroke="#555" stroke-width="2"/></svg>
<div class="ab" style="left:357px;top:181px;width:772px;height:349px;background:#f0f0f0;border:1px solid #46739f;box-shadow:1px 0 0 rgba(60,80,100,0.5), 2px 3px 7px 1px rgba(50,35,25,0.33)"></div>
<div class="ab" style="left:1127px;top:207px;width:1px;height:321px;background:#fff"></div>
<div class="ab" style="left:358px;top:528px;width:770px;height:1px;background:#fff"></div>
<div class="ab" style="left:358px;top:182px;width:770px;height:25px;background:#fff"></div>
<svg class="ab" style="left:358px;top:183px" width="22" height="22" shape-rendering="crispEdges">
<defs><linearGradient id="hg" x1="0" y1="0" x2="1" y2="1"><stop offset="0" stop-color="#dfe4ea"/><stop offset="1" stop-color="#55575f"/></linearGradient>
<linearGradient id="yg" x1="0" y1="0" x2="1" y2="1"><stop offset="0" stop-color="#fbfbe6"/><stop offset="0.4" stop-color="#e6e2b0"/><stop offset="1" stop-color="#8f8a4a"/></linearGradient></defs>
<polygon points="9,4 13,4 15,6 15,11 12,11 9,9 8,6" fill="url(#hg)"/>
<polygon points="10,11 15,11 18,12 18,18 10,18 9,14" fill="url(#yg)"/>
<g fill="#000"><rect x="9" y="3" width="1" height="1"/><rect x="10" y="3" width="1" height="1"/><rect x="12" y="3" width="1" height="1"/><rect x="13" y="4" width="1" height="1"/><rect x="14" y="5" width="1" height="1"/><rect x="8" y="4" width="1" height="1"/><rect x="7" y="5" width="1" height="1"/><rect x="6" y="6" width="1" height="1"/><rect x="6" y="7" width="1" height="1"/><rect x="7" y="9" width="1" height="1"/><rect x="8" y="8" width="1" height="1"/><rect x="9" y="8" width="1" height="1"/><rect x="10" y="8" width="1" height="1"/><rect x="5" y="10" width="1" height="1"/><rect x="6" y="10" width="1" height="1"/><rect x="5" y="11" width="1" height="1"/><rect x="9" y="10" width="1" height="1"/><rect x="13" y="11" width="1" height="1"/><rect x="14" y="11" width="1" height="1"/><rect x="15" y="11" width="1" height="1"/><rect x="16" y="11" width="1" height="1"/><rect x="6" y="12" width="1" height="1"/><rect x="3" y="14" width="1" height="1"/><rect x="4" y="13" width="1" height="1"/><rect x="5" y="13" width="1" height="1"/><rect x="7" y="13" width="1" height="1"/><rect x="8" y="14" width="1" height="1"/><rect x="10" y="14" width="1" height="1"/><rect x="12" y="14" width="1" height="1"/><rect x="12" y="15" width="1" height="1"/><rect x="13" y="16" width="1" height="1"/><rect x="6" y="15" width="1" height="1"/><rect x="7" y="16" width="1" height="1"/><rect x="10" y="16" width="1" height="1"/><rect x="3" y="18" width="1" height="1"/><rect x="4" y="18" width="1" height="1"/><rect x="5" y="17" width="1" height="1"/><rect x="7" y="17" width="1" height="1"/><rect x="8" y="18" width="1" height="1"/><rect x="15" y="5" width="1" height="1"/><rect x="15" y="6" width="1" height="1"/><rect x="15" y="7" width="1" height="1"/><rect x="15" y="8" width="1" height="1"/><rect x="15" y="9" width="1" height="1"/><rect x="15" y="10" width="1" height="1"/><rect x="15" y="11" width="1" height="1"/><rect x="18" y="12" width="1" height="1"/><rect x="18" y="13" width="1" height="1"/><rect x="18" y="14" width="1" height="1"/><rect x="18" y="15" width="1" height="1"/><rect x="18" y="16" width="1" height="1"/><rect x="18" y="17" width="1" height="1"/><rect x="18" y="18" width="1" height="1"/></g>
</svg>
<div class="t" style="left:382px;top:187px;font-size:12.4px;line-height:15px;transform:none">Armor</div>
<div class="ab" style="left:1009px;top:194px;width:10px;height:1px;background:#000"></div>
<div class="ab" style="left:1054px;top:189px;width:10px;height:10px;border:1px solid #c4c4c4"></div>
<svg class="ab" style="left:1099px;top:188px" width="12" height="12"><path d="M1 1 L11 11 M11 1 L1 11" stroke="#000" stroke-width="1.1"/></svg>
<div class="t rt" style="right:977px;top:229px;text-align:right">ID</div>
<div class="sunk" style="left:417px;top:225px;width:176px;height:20px"></div>
<div class="t" style="left:420px;top:229px">MK_ANA_Fem_G</div>
<div class="t rt" style="right:977px;top:255px;text-align:right">Name</div>
<div class="sunk" style="left:417px;top:251px;width:176px;height:20px"></div>
<div class="t rt" style="right:977px;top:280px;text-align:right">Type</div>
<div class="sunk" style="left:417px;top:275px;width:176px;height:21px"></div>
<div class="rais" style="left:574px;top:277px;width:17px;height:17px"></div>
<svg class="ab" style="left:579px;top:284px" width="7" height="4" shape-rendering="crispEdges"><g fill="#000"><rect x="0" y="0" width="7" height="1"/><rect x="1" y="1" width="5" height="1"/><rect x="2" y="2" width="3" height="1"/><rect x="3" y="3" width="1" height="1"/></g></svg>
<div class="t" style="left:421px;top:280px">Cuirass</div>
<div class="t rt" style="right:977px;top:306px;text-align:right">Script</div>
<div class="sunk" style="left:417px;top:301px;width:146px;height:21px"></div>
<div class="rais" style="left:544px;top:303px;width:17px;height:17px"></div>
<svg class="ab" style="left:549px;top:310px" width="7" height="4" shape-rendering="crispEdges"><g fill="#000"><rect x="0" y="0" width="7" height="1"/><rect x="1" y="1" width="5" height="1"/><rect x="2" y="2" width="3" height="1"/><rect x="3" y="3" width="1" height="1"/></g></svg>
<div class="rais" style="left:568px;top:301px;width:25px;height:21px"></div>
<div class="t ctr" style="left:568px;width:25px;top:305px;text-align:center">...</div>
<div class="t" style="left:379px;top:343px">Weight</div>
<div class="sunk" style="left:418px;top:339px;width:60px;height:20px"></div>
<div class="t" style="left:421px;top:343px">1.00</div>
<div class="t" style="left:484px;top:343px">Light</div>
<div class="t" style="left:542px;top:343px">AR</div>
<div class="sunk" style="left:561px;top:339px;width:32px;height:20px"></div>
<div class="t" style="left:564px;top:343px">1</div>
<div class="t" style="left:380px;top:374px">Health</div>
<div class="sunk" style="left:417px;top:368px;width:60px;height:20px"></div>
<div class="t" style="left:420px;top:372px">100</div>
<div class="t" style="left:499px;top:372px">Value</div>
<div class="sunk" style="left:532px;top:368px;width:60px;height:20px"></div>
<div class="t" style="left:535px;top:372px">1</div>
<div class="rais" style="left:373px;top:397px;width:163px;height:28px"></div>
<div class="t ctr" style="left:373px;width:163px;top:405px;text-align:center">a\MK_ANA_Fem_G.nif</div>
<div class="rais" style="left:373px;top:433px;width:163px;height:28px"></div>
<div class="t ctr" style="left:373px;width:163px;top:441px;text-align:center">Inventory Image</div>
<div class="ab" style="left:543px;top:398px;width:50px;height:55px;border:1px solid #a0a0a0;border-top-color:#f0f0f0;box-shadow:inset 1px 0 0 #fff"></div>
<div class="t" style="left:378px;top:475px">Enchantment</div>
<div class="sunk" style="left:448px;top:470px;width:35px;height:20px"></div>
<div class="t" style="left:451px;top:474px">100</div>
<div class="t" style="left:378px;top:501px">Enchanting</div>
<div class="sunk" style="left:448px;top:496px;width:146px;height:21px"></div>
<div class="rais" style="left:575px;top:498px;width:17px;height:17px"></div>
<svg class="ab" style="left:580px;top:505px" width="7" height="4" shape-rendering="crispEdges"><g fill="#000"><rect x="0" y="0" width="7" height="1"/><rect x="1" y="1" width="5" height="1"/><rect x="2" y="2" width="3" height="1"/><rect x="3" y="3" width="1" height="1"/></g></svg>
<div class="grp" style="left:609px;top:224px;width:142px;height:251px"></div>
<div class="gl" style="left:616px;top:219px">Biped Object</div>
<div class="grp" style="left:754px;top:224px;width:178px;height:251px"></div>
<div class="gl" style="left:761px;top:219px">Male Armor</div>
<div class="grp" style="left:939px;top:224px;width:178px;height:251px"></div>
<div class="gl" style="left:946px;top:219px">Female Armor</div>
<div class="sunk" style="left:615px;top:240px;width:133px;height:21px"></div>
<div class="rais" style="left:729px;top:242px;width:17px;height:17px"></div>
<svg class="ab" style="left:734px;top:249px" width="7" height="4" shape-rendering="crispEdges"><g fill="#000"><rect x="0" y="0" width="7" height="1"/><rect x="1" y="1" width="5" height="1"/><rect x="2" y="2" width="3" height="1"/><rect x="3" y="3" width="1" height="1"/></g></svg>
<div class="t" style="left:619px;top:245px">Chest</div>
<div class="sunk" style="left:763px;top:240px;width:161px;height:21px"></div>
<div class="rais" style="left:905px;top:242px;width:17px;height:17px"></div>
<svg class="ab" style="left:910px;top:249px" width="7" height="4" shape-rendering="crispEdges"><g fill="#000"><rect x="0" y="0" width="7" height="1"/><rect x="1" y="1" width="5" height="1"/><rect x="2" y="2" width="3" height="1"/><rect x="3" y="3" width="1" height="1"/></g></svg>
<div class="sunk" style="left:948px;top:240px;width:161px;height:21px"></div>
<div class="rais" style="left:1090px;top:242px;width:17px;height:17px"></div>
<svg class="ab" style="left:1095px;top:249px" width="7" height="4" shape-rendering="crispEdges"><g fill="#000"><rect x="0" y="0" width="7" height="1"/><rect x="1" y="1" width="5" height="1"/><rect x="2" y="2" width="3" height="1"/><rect x="3" y="3" width="1" height="1"/></g></svg>
<div class="ab" style="left:950px;top:242px;width:140px;height:17px;background:#fff"></div>
<div class="ab" style="left:951px;top:243px;width:138px;height:15px;background:#0078d7"></div>
<div class="t" style="left:952px;top:245px;color:#fff">MK_ANA_Fem</div>
<div class="sunk" style="left:615px;top:272px;width:133px;height:21px"></div>
<div class="rais" style="left:729px;top:274px;width:17px;height:17px"></div>
<svg class="ab" style="left:734px;top:281px" width="7" height="4" shape-rendering="crispEdges"><g fill="#000"><rect x="0" y="0" width="7" height="1"/><rect x="1" y="1" width="5" height="1"/><rect x="2" y="2" width="3" height="1"/><rect x="3" y="3" width="1" height="1"/></g></svg>
<div class="sunk dis" style="left:763px;top:272px;width:161px;height:21px"></div>
<div class="rais" style="left:905px;top:274px;width:17px;height:17px"></div>
<svg class="ab" style="left:910px;top:281px" width="7" height="4" shape-rendering="crispEdges"><g fill="#a0a0a0"><rect x="0" y="0" width="7" height="1"/><rect x="1" y="1" width="5" height="1"/><rect x="2" y="2" width="3" height="1"/><rect x="3" y="3" width="1" height="1"/></g></svg>
<div class="sunk dis" style="left:948px;top:272px;width:161px;height:21px"></div>
<div class="rais" style="left:1090px;top:274px;width:17px;height:17px"></div>
<svg class="ab" style="left:1095px;top:281px" width="7" height="4" shape-rendering="crispEdges"><g fill="#a0a0a0"><rect x="0" y="0" width="7" height="1"/><rect x="1" y="1" width="5" height="1"/><rect x="2" y="2" width="3" height="1"/><rect x="3" y="3" width="1" height="1"/></g></svg>
<div class="sunk" style="left:615px;top:305px;width:133px;height:21px"></div>
<div class="rais" style="left:729px;top:307px;width:17px;height:17px"></div>
<svg class="ab" style="left:734px;top:314px" width="7" height="4" shape-rendering="crispEdges"><g fill="#000"><rect x="0" y="0" width="7" height="1"/><rect x="1" y="1" width="5" height="1"/><rect x="2" y="2" width="3" height="1"/><rect x="3" y="3" width="1" height="1"/></g></svg>
<div class="sunk dis" style="left:763px;top:305px;width:161px;height:21px"></div>
<div class="rais" style="left:905px;top:307px;width:17px;height:17px"></div>
<svg class="ab" style="left:910px;top:314px" width="7" height="4" shape-rendering="crispEdges"><g fill="#a0a0a0"><rect x="0" y="0" width="7" height="1"/><rect x="1" y="1" width="5" height="1"/><rect x="2" y="2" width="3" height="1"/><rect x="3" y="3" width="1" height="1"/></g></svg>
<div class="sunk dis" style="left:948px;top:305px;width:161px;height:21px"></div>
<div class="rais" style="left:1090px;top:307px;width:17px;height:17px"></div>
<svg class="ab" style="left:1095px;top:314px" width="7" height="4" shape-rendering="crispEdges"><g fill="#a0a0a0"><rect x="0" y="0" width="7" height="1"/><rect x="1" y="1" width="5" height="1"/><rect x="2" y="2" width="3" height="1"/><rect x="3" y="3" width="1" height="1"/></g></svg>
<div class="sunk" style="left:615px;top:337px;width:133px;height:21px"></div>
<div class="rais" style="left:729px;top:339px;width:17px;height:17px"></div>
<svg class="ab" style="left:734px;top:346px" width="7" height="4" shape-rendering="crispEdges"><g fill="#000"><rect x="0" y="0" width="7" height="1"/><rect x="1" y="1" width="5" height="1"/><rect x="2" y="2" width="3" height="1"/><rect x="3" y="3" width="1" height="1"/></g></svg>
<div class="sunk dis" style="left:763px;top:337px;width:161px;height:21px"></div>
<div class="rais" style="left:905px;top:339px;width:17px;height:17px"></div>
<svg class="ab" style="left:910px;top:346px" width="7" height="4" shape-rendering="crispEdges"><g fill="#a0a0a0"><rect x="0" y="0" width="7" height="1"/><rect x="1" y="1" width="5" height="1"/><rect x="2" y="2" width="3" height="1"/><rect x="3" y="3" width="1" height="1"/></g></svg>
<div class="sunk dis" style="left:948px;top:337px;width:161px;height:21px"></div>
<div class="rais" style="left:1090px;top:339px;width:17px;height:17px"></div>
<svg class="ab" style="left:1095px;top:346px" width="7" height="4" shape-rendering="crispEdges"><g fill="#a0a0a0"><rect x="0" y="0" width="7" height="1"/><rect x="1" y="1" width="5" height="1"/><rect x="2" y="2" width="3" height="1"/><rect x="3" y="3" width="1" height="1"/></g></svg>
<div class="sunk" style="left:615px;top:370px;width:133px;height:21px"></div>
<div class="rais" style="left:729px;top:372px;width:17px;height:17px"></div>
<svg class="ab" style="left:734px;top:379px" width="7" height="4" shape-rendering="crispEdges"><g fill="#000"><rect x="0" y="0" width="7" height="1"/><rect x="1" y="1" width="5" height="1"/><rect x="2" y="2" width="3" height="1"/><rect x="3" y="3" width="1" height="1"/></g></svg>
<div class="sunk dis" style="left:763px;top:370px;width:161px;height:21px"></div>
<div class="rais" style="left:905px;top:372px;width:17px;height:17px"></div>
<svg class="ab" style="left:910px;top:379px" width="7" height="4" shape-rendering="crispEdges"><g fill="#a0a0a0"><rect x="0" y="0" width="7" height="1"/><rect x="1" y="1" width="5" height="1"/><rect x="2" y="2" width="3" height="1"/><rect x="3" y="3" width="1" height="1"/></g></svg>
<div class="sunk dis" style="left:948px;top:370px;width:161px;height:21px"></div>
<div class="rais" style="left:1090px;top:372px;width:17px;height:17px"></div>
<svg class="ab" style="left:1095px;top:379px" width="7" height="4" shape-rendering="crispEdges"><g fill="#a0a0a0"><rect x="0" y="0" width="7" height="1"/><rect x="1" y="1" width="5" height="1"/><rect x="2" y="2" width="3" height="1"/><rect x="3" y="3" width="1" height="1"/></g></svg>
<div class="sunk" style="left:615px;top:402px;width:133px;height:21px"></div>
<div class="rais" style="left:729px;top:404px;width:17px;height:17px"></div>
<svg class="ab" style="left:734px;top:411px" width="7" height="4" shape-rendering="crispEdges"><g fill="#000"><rect x="0" y="0" width="7" height="1"/><rect x="1" y="1" width="5" height="1"/><rect x="2" y="2" width="3" height="1"/><rect x="3" y="3" width="1" height="1"/></g></svg>
<div class="sunk dis" style="left:763px;top:402px;width:161px;height:21px"></div>
<div class="rais" style="left:905px;top:404px;width:17px;height:17px"></div>
<svg class="ab" style="left:910px;top:411px" width="7" height="4" shape-rendering="crispEdges"><g fill="#a0a0a0"><rect x="0" y="0" width="7" height="1"/><rect x="1" y="1" width="5" height="1"/><rect x="2" y="2" width="3" height="1"/><rect x="3" y="3" width="1" height="1"/></g></svg>
<div class="sunk dis" style="left:948px;top:402px;width:161px;height:21px"></div>
<div class="rais" style="left:1090px;top:404px;width:17px;height:17px"></div>
<svg class="ab" style="left:1095px;top:411px" width="7" height="4" shape-rendering="crispEdges"><g fill="#a0a0a0"><rect x="0" y="0" width="7" height="1"/><rect x="1" y="1" width="5" height="1"/><rect x="2" y="2" width="3" height="1"/><rect x="3" y="3" width="1" height="1"/></g></svg>
<div class="sunk" style="left:615px;top:435px;width:133px;height:21px"></div>
<div class="rais" style="left:729px;top:437px;width:17px;height:17px"></div>
<svg class="ab" style="left:734px;top:444px" width="7" height="4" shape-rendering="crispEdges"><g fill="#000"><rect x="0" y="0" width="7" height="1"/><rect x="1" y="1" width="5" height="1"/><rect x="2" y="2" width="3" height="1"/><rect x="3" y="3" width="1" height="1"/></g></svg>
<div class="sunk dis" style="left:763px;top:435px;width:161px;height:21px"></div>
<div class="rais" style="left:905px;top:437px;width:17px;height:17px"></div>
<svg class="ab" style="left:910px;top:444px" width="7" height="4" shape-rendering="crispEdges"><g fill="#a0a0a0"><rect x="0" y="0" width="7" height="1"/><rect x="1" y="1" width="5" height="1"/><rect x="2" y="2" width="3" height="1"/><rect x="3" y="3" width="1" height="1"/></g></svg>
<div class="sunk dis" style="left:948px;top:435px;width:161px;height:21px"></div>
<div class="rais" style="left:1090px;top:437px;width:17px;height:17px"></div>
<svg class="ab" style="left:1095px;top:444px" width="7" height="4" shape-rendering="crispEdges"><g fill="#a0a0a0"><rect x="0" y="0" width="7" height="1"/><rect x="1" y="1" width="5" height="1"/><rect x="2" y="2" width="3" height="1"/><rect x="3" y="3" width="1" height="1"/></g></svg>
<div class="sunk" style="left:681px;top:489px;width:13px;height:13px"></div>
<div class="t" style="left:699px;top:490px">References Persist</div>
<div class="sunk" style="left:877px;top:498px;width:13px;height:13px"></div>
<div class="t" style="left:895px;top:500px">Blocked</div>
<div class="ab" style="left:946px;top:493px;width:75px;height:23px;border:1px solid #000"></div>
<div class="rais" style="left:947px;top:494px;width:73px;height:21px"></div>
<div class="t ctr" style="left:946px;width:75px;top:498px;text-align:center">OK</div>
<div class="rais" style="left:1038px;top:493px;width:75px;height:23px"></div>
<div class="t ctr" style="left:1038px;width:75px;top:498px;text-align:center">Cancel</div>
</body></html>
